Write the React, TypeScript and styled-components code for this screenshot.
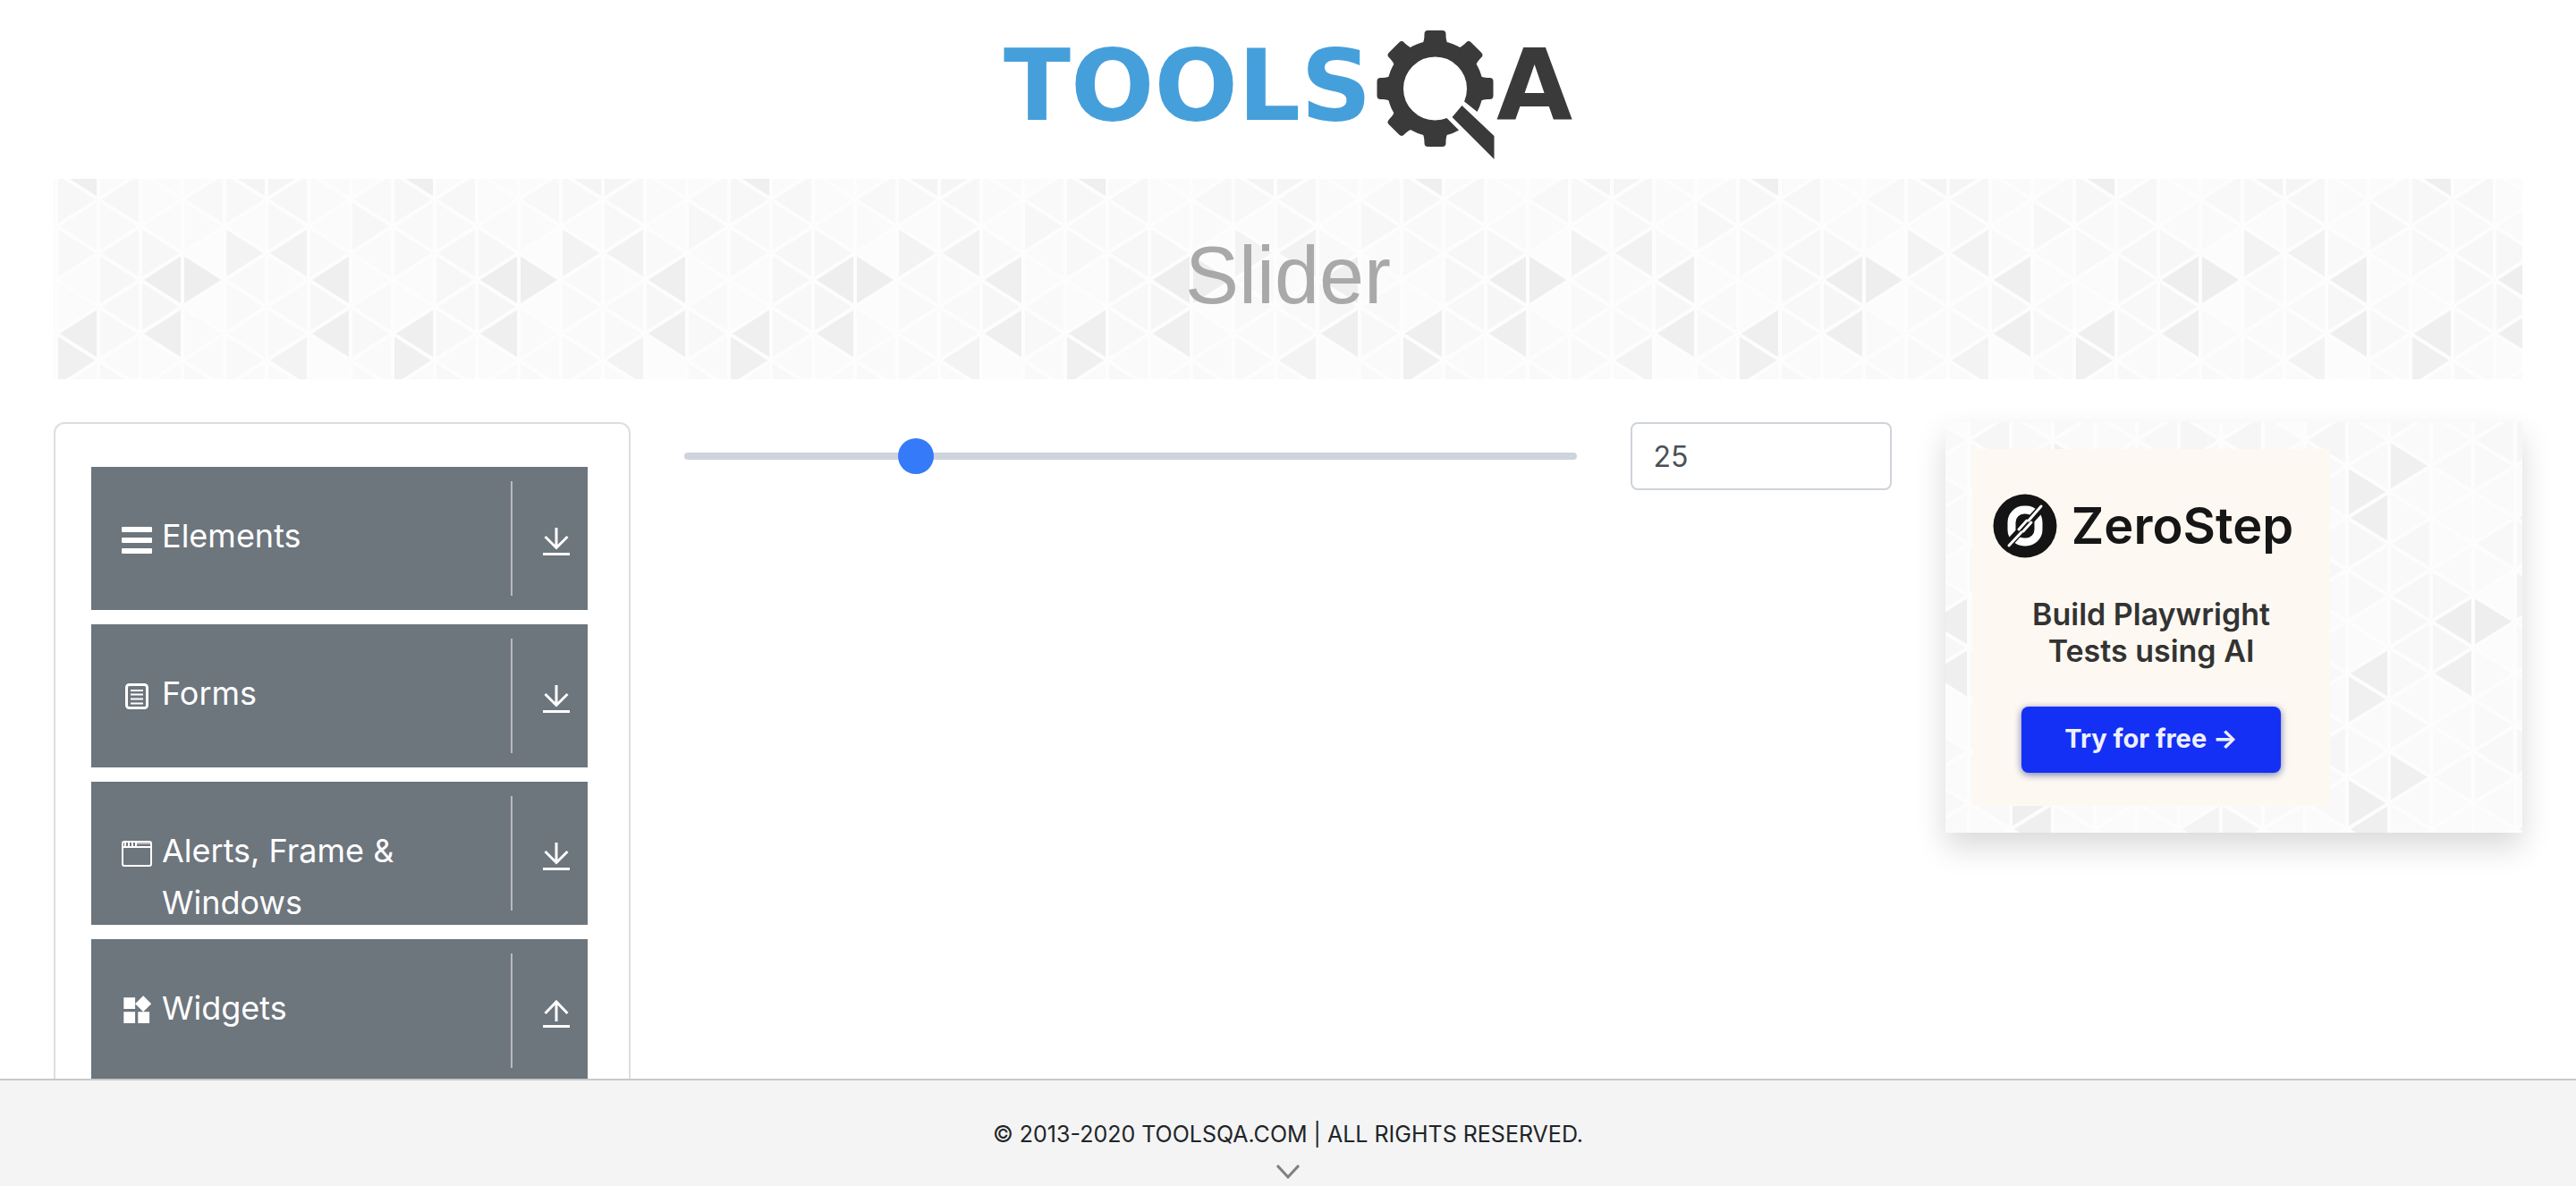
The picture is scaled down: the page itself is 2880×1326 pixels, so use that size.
import React, { useState } from "react";
import styled, { createGlobalStyle } from "styled-components";

const GlobalStyle = createGlobalStyle`
  *, *::before, *::after { box-sizing: border-box; }
  body {
    margin: 0;
    background: #fff;
    color: #212529;
    font-family: Inter, Roboto, "Liberation Sans", sans-serif;
  }
`;

const Page = styled.div`
  display: flex;
  flex-direction: column;
  height: 100vh;
`;

const Scroller = styled.div`
  flex: 1;
  min-height: 0;
  overflow-y: auto;
  scrollbar-width: none;
`;

const Header = styled.header`
  display: flex;
  justify-content: center;
  padding: 10px 0 0;
`;

const HomeLink = styled.a`
  display: block;
  height: 190px;
`;

const LogoText = styled.text<{ $color: string }>`
  font-family: "DejaVu Sans", sans-serif;
  font-size: 110px;
  font-weight: 700;
  fill: ${(p) => p.$color};
`;

const Body = styled.div`
  padding: 0 60px;
`;

const Banner = styled.div`
  position: relative;
  display: flex;
  align-items: center;
  justify-content: center;
  height: 224px;
  margin-bottom: 48px;
  padding-bottom: 8px;
`;

const Backdrop = styled.svg`
  position: absolute;
  inset: 0;
  width: 100%;
  height: 100%;
`;

const Title = styled.h1`
  position: relative;
  margin: 0;
  color: #a9a9a9;
  font-family: "Liberation Sans", Arial, sans-serif;
  font-size: 90px;
  font-weight: 400;
  line-height: 116px;
`;

const Columns = styled.div`
  display: grid;
  grid-template-columns: repeat(12, 1fr);
  column-gap: 60px;
  align-items: start;
`;

const Sidebar = styled.nav`
  grid-column: span 3;
  display: flex;
  flex-direction: column;
  gap: 16px;
  padding: 48px 46px 48px 40px;
  border: 2px solid #dedede;
  border-radius: 12px;
`;

const MenuButton = styled.button`
  display: flex;
  height: 160px;
  padding: 0;
  border: 0;
  background: #6d757d;
  color: #fff;
  font: inherit;
  text-align: left;
  cursor: pointer;
`;

const MenuLabel = styled.span`
  flex: 1;
  display: flex;
  align-items: flex-start;
  gap: 8px;
  padding: 48px 32px 0 31px;
  font-size: 36px;
  line-height: 58px;
`;

const MenuIcon = styled.svg`
  flex: none;
  width: 40px;
  height: 40px;
  margin-top: 12px;
`;

const MenuArrow = styled.span`
  display: flex;
  align-items: center;
  justify-content: flex-end;
  width: 86px;
  margin: 16px 0;
  padding: 8px 20px 0 0;
  border-left: 2px solid #b9bbbe;
`;

const Main = styled.main`
  grid-column: span 6;
  display: grid;
  grid-template-columns: repeat(12, 1fr);
  column-gap: 60px;
  align-items: center;
`;

const Range = styled.input`
  grid-column: span 9;
  width: 100%;
  height: 40px;
  margin: 0;
  appearance: none;
  background: transparent;
  cursor: pointer;

  &::-webkit-slider-runnable-track {
    height: 8px;
    border-radius: 4px;
    background: #ced4dc;
  }
  &::-webkit-slider-thumb {
    appearance: none;
    width: 40px;
    height: 40px;
    margin-top: -16px;
    border-radius: 50%;
    background: #357af8;
  }
`;

const ValueBox = styled.input`
  grid-column: span 3;
  width: 100%;
  height: 76px;
  padding: 0 24px;
  border: 2px solid #ced4da;
  border-radius: 8px;
  background: #fff;
  color: #495057;
  font-family: inherit;
  font-size: 32px;
`;

const AdPanel = styled.aside`
  position: relative;
  grid-column: span 3;
  padding: 30px;
  box-shadow: 0 16px 32px rgba(0, 0, 0, 0.15);
`;

const Ad = styled.section`
  position: relative;
  display: flex;
  flex-direction: column;
  align-items: center;
  width: 400px;
  max-width: 100%;
  padding: 50px 0 37px;
  background: #fdf9f2;
`;

const Brand = styled.div`
  display: flex;
  align-items: center;
  gap: 16px;
  height: 72px;
  margin-right: 18px;
  color: #161616;
  font-size: 56px;
  font-weight: 600;
  line-height: 72px;
  white-space: nowrap;
`;

const Pitch = styled.p`
  margin: 42px 0;
  color: #333;
  font-size: 34px;
  font-weight: 600;
  line-height: 41px;
  text-align: center;
`;

const TryLink = styled.a`
  display: flex;
  align-items: center;
  justify-content: center;
  width: 290px;
  height: 74px;
  padding-bottom: 4px;
  border-radius: 8px;
  background: #1430f5;
  box-shadow: 0 2px 8px rgba(20, 30, 120, 0.6);
  color: #eef0ff;
  font-size: 29px;
  font-weight: 700;
  text-decoration: none;
`;

const Footer = styled.footer`
  display: flex;
  flex-direction: column;
  align-items: center;
  height: 120px;
  padding-top: 44px;
  border-top: 2px solid #c8c8c8;
  background: #f4f4f4;
  font-size: 25px;
  line-height: 32px;
`;

const Chevron = styled.svg`
  display: block;
  margin-top: 18px;
`;

/* Grey levels of the triangles: one list per column, one entry per half step down. */
const SHADES = [
  ["f7", "f9", "f8", "fb", "fb", "ef", "f0", "fa", "f9", "f9", "ef", "ef"],
  ["f7", "f9", "f7", "f7", "f8", "f8", "fa", "f8", "fa", "f0", "fa", "fa"],
  ["fb", "fa", "f7", "ee", "f6", "ef", "fb", "fa", "fa", "f9", "fb", "fb"],
  ["f8", "fa", "fc", "ee", "fc", "fa", "fa", "f9", "f8", "f9", "fa", "fb"],
  ["f8", "fb", "f3", "f9", "f9", "fa", "f9", "fa", "f6", "f9", "fb", "f4"],
  ["f7", "f8", "f2", "fa", "f9", "f9", "f3", "fa", "f6", "fa", "f9", "f5"],
  ["fa", "fb", "f9", "ef", "f7", "ef", "fc", "fc", "f9", "fb", "f9", "fa"],
  ["f9", "f7", "fa", "fb", "f9", "f8", "fa", "f9", "f6", "f9", "f9", "fb"],
];
const COLUMN = 47;

interface TrianglesProps {
  id: string;
  x: number;
  y: number;
  step: number;
}

function Triangles({ id, x, y, step }: TrianglesProps) {
  const shapes: React.ReactNode[] = [];
  SHADES.forEach((column, c) => {
    for (let a = -1; a <= 12; a++) {
      const shade = column[(a + 12) % 12];
      const left = c * COLUMN;
      const right = left + COLUMN;
      const pointsRight = (c + a + 12) % 2 === 0;
      const apex = pointsRight ? right : left;
      const base = pointsRight ? left : right;
      shapes.push(
        <polygon
          key={`${c}:${a}`}
          points={`${apex},${a * step} ${base},${(a - 1) * step} ${base},${(a + 1) * step}`}
          fill={`#${shade}${shade}${shade}`}
        />
      );
    }
  });
  return (
    <Backdrop aria-hidden="true">
      <defs>
        <pattern
          id={id}
          x={x}
          y={y}
          width={COLUMN * 8}
          height={step * 12}
          patternUnits="userSpaceOnUse"
        >
          <g stroke="#fdfdfd" strokeWidth="4" strokeLinejoin="round">
            {shapes}
            <path d={`M0 0V${step * 12}M${COLUMN * 8} 0V${step * 12}`} />
          </g>
        </pattern>
      </defs>
      <rect width="100%" height="100%" fill={`url(#${id})`} />
    </Backdrop>
  );
}

const TOOTH =
  "M-17-46C-13-51-12-54-12-61Q-12-65-8-65H8Q12-65 12-61C12-54 13-51 17-46Z";

function Logo() {
  return (
    <svg width="680" height="180" viewBox="0 0 680 180" role="img" aria-label="TOOLSQA">
      <LogoText x="22" y="124" $color="#459fdb">
        TOOLS
      </LogoText>
      <g transform="translate(504.5 89)" fill="#3a3a3a">
        <circle r="44.5" fill="none" stroke="#3a3a3a" strokeWidth="18" />
        {[0, 45, 90, 180, 225, 270, 315].map((angle) => (
          <path key={angle} d={TOOTH} transform={`rotate(${angle})`} />
        ))}
        <path d="M32 14L47 26L86 66L56 86L26 46L13 33L18 20Z" fill="#fff" />
        <path d="M30 19L66 53V79L19 32Z" />
      </g>
      <LogoText x="573" y="124" $color="#3a3a3a">
        A
      </LogoText>
    </svg>
  );
}

const ICONS: Record<string, React.ReactNode> = {
  bars: (
    <g fill="#fff">
      <rect x="3" y="7" width="34" height="6" rx="1" />
      <rect x="3" y="19" width="34" height="6" rx="1" />
      <rect x="3" y="31" width="34" height="6" rx="1" />
    </g>
  ),
  form: (
    <g fill="none" stroke="#fff">
      <rect x="8.5" y="7.5" width="23" height="26" rx="3" strokeWidth="3" />
      <path d="M13 14h14M13 18.5h14M13 23.5h14M13 28.5h14" strokeWidth="2" />
    </g>
  ),
  window: (
    <g fill="none" stroke="#fff" strokeWidth="2">
      <rect x="4" y="7" width="32" height="27" rx="2" />
      <path d="M4 13h32" />
      <path d="M7 8v5M11 8v5M15 8v5M19 8v5" />
      <path d="M20 9h15" strokeWidth="1" />
    </g>
  ),
  widgets: (
    <path
      fill="#fff"
      transform="translate(0.5 0.5) scale(1.6)"
      d="M13 13v8h8v-8h-8zM3 21h8v-8H3v8zM3 3v8h8V3H3zm13.66-1.31L11 7.34 16.66 13l5.66-5.66-5.66-5.65z"
    />
  ),
};

function ArrowIcon({ up }: { up?: boolean }) {
  return (
    <svg width="30" height="32" viewBox="0 0 30 32" fill="none" stroke="#fff" strokeWidth="3" aria-hidden="true">
      <path d={up ? "M15 24V3M2.5 15L15 2L27.500 15" : "M15 0V22M2.5 10L15 22.500L27.500 10"} />
      <path d="M0 29.500H30" />
    </svg>
  );
}

const MENU = [
  { label: "Elements", icon: "bars" },
  { label: "Forms", icon: "form" },
  { label: "Alerts, Frame & Windows", icon: "window" },
  { label: "Widgets", icon: "widgets", open: true },
];

function ZeroStepMark() {
  return (
    <svg width="72" height="72" viewBox="0 0 72 72" aria-hidden="true">
      <circle cx="36" cy="36" r="35.500" fill="#141414" />
      <rect x="21" y="18" width="30" height="36" rx="14" fill="none" stroke="#fff" strokeWidth="9" />
      <path d="M14 60L58 12" stroke="#141414" strokeWidth="9" />
      <path d="M18 58L32 43M40 30L54 14M29 40L38 30M34 42L43 32" stroke="#fff" strokeWidth="3" strokeLinecap="round" />
    </svg>
  );
}

export default function App() {
  const [value, setValue] = useState(25);
  return (
    <Page>
      <GlobalStyle />
      <Scroller>
        <Header>
          <HomeLink href="#home">
            <Logo />
          </HomeLink>
        </Header>
        <Body>
          <Banner>
            <Triangles id="banner-triangles" x={3} y={23} step={30} />
            <Title>Slider</Title>
          </Banner>
          <Columns>
            <Sidebar aria-label="Sections">
              {MENU.map((item) => (
                <MenuButton key={item.label} type="button" aria-expanded={!!item.open}>
                  <MenuLabel>
                    <MenuIcon viewBox="0 0 40 40" aria-hidden="true">
                      {ICONS[item.icon]}
                    </MenuIcon>
                    <span>{item.label}</span>
                  </MenuLabel>
                  <MenuArrow>
                    <ArrowIcon up={item.open} />
                  </MenuArrow>
                </MenuButton>
              ))}
            </Sidebar>
            <Main>
              <Range
                type="range"
                min={0}
                max={100}
                value={value}
                aria-label="Slider"
                onChange={(e) => setValue(Number(e.target.value))}
              />
              <ValueBox type="text" readOnly value={value} aria-label="Slider value" />
            </Main>
            <AdPanel>
              <Triangles id="ad-triangles" x={73} y={136} step={29} />
              <Ad>
                <Brand>
                  <ZeroStepMark />
                  ZeroStep
                </Brand>
                <Pitch>
                  Build Playwright
                  <br />
                  Tests using AI
                </Pitch>
                <TryLink href="#try">Try for free →</TryLink>
              </Ad>
            </AdPanel>
          </Columns>
        </Body>
      </Scroller>
      <Footer>
        <span>© 2013-2020 TOOLSQA.COM | ALL RIGHTS RESERVED.</span>
        <Chevron width="26" height="16" viewBox="0 0 26 16" fill="none" stroke="#808080" strokeWidth="3" aria-hidden="true">
          <path d="M1 1L13 14L25 1" />
        </Chevron>
      </Footer>
    </Page>
  );
}
